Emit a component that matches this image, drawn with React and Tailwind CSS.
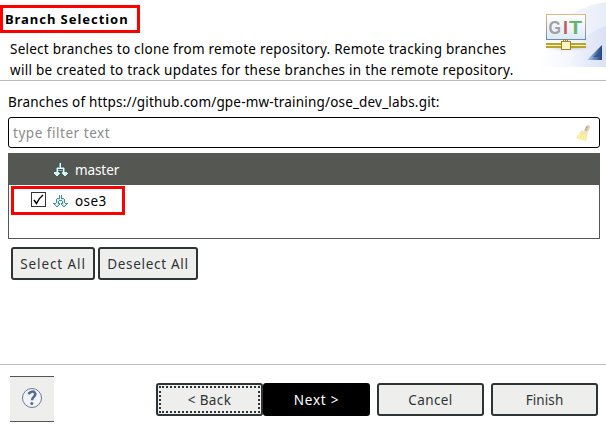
import React from 'react';

function BranchIcon({ split }) {
  return (
    <svg width="16" height="16" viewBox="0 0 16 16" fill="none" shapeRendering="crispEdges">
      {split ? (
        <g>
          <path d="M6 2h1v4h-1zM8 2h1v4h-1z" fill="#4b8f94" />
          <path d="M7 2h1v5h-1z" fill="#d9f6f7" />
          <path d="M4 5h3v1h-3zM8 5h3v1h-3zM3 6h1v4h-1zM11 6h1v4h-1zM5 8h1v3h-1zM9 8h1v3h-1zM6 7h3v1h-3z" fill="#4b8f94" />
          <path d="M4 6h7v1h-7zM4 7h1v5h-1zM10 7h1v5h-1z" fill="#c5eff2" />
          <path d="M0 10.5h3M5 10.5h2M8 10.5h2M12 10.5h3M1 11.5h1M6 11.5h1M8 11.5h1M13 11.5h1M2 12.5h1M5 12.5h1M9 12.5h1M12 12.5h1M3 13.5h2M10 13.5h2" stroke="#4b8f94" />
          <path d="M2 11.5h4M9 11.5h4M3 12.5h2M10 12.5h2" stroke="#c5eff2" />
        </g>
      ) : (
        <g>
          <path d="M6 1h1v4h-1zM4 5h7v1h-7zM3 6h1v4h-1zM11 6h1v4h-1zM5 8h5v1h-5z" fill="#7ab0b3" />
          <path d="M7 1h1v5h-1zM4 6h7v1h-7zM4 7h1v4h-1zM10 7h1v4h-1z" fill="#e2ffff" />
          <path d="M1 10h5v1h1v1h-1v1h-1v1h-2v-1h-1v-1h-1zM9 10h5v1h1v1h-1v1h-1v1h-2v-1h-1v-1h-1z" fill="#c9f8fa" />
        </g>
      )}
    </svg>
  );
}

function Broom() {
  return (
    <svg width="16" height="18" viewBox="0 0 16 18">
      <path d="M11 2l2-1 2 1-1 4-3 3-2-2z" fill="#dfcaa9" />
      <path d="M11 3l2 1M10 5l2 1" stroke="#b5a187" />
      <path d="M6 7l7 2-2 8-4-1-6-2z" fill="#f5eb91" />
      <path d="M6 6l7 2v2l-7-2z" fill="#e9e6e2" />
      <path d="M5 10l-2 4M8 11l-2 5M10 11l-1 5" stroke="#fff8c8" />
    </svg>
  );
}

function GitBanner() {
  return (
    <svg width="76" height="76" viewBox="0 0 76 76">
      <defs>
        <linearGradient id="sweep" x1="0" y1="0" x2="1" y2="0">
          <stop offset="0" stopColor="#ffffff" /><stop offset="1" stopColor="#e8edfa" />
        </linearGradient>
        <linearGradient id="fold" x1="0" y1="0" x2="1" y2="0">
          <stop offset="0" stopColor="#f4f6fd" /><stop offset="1" stopColor="#d9e1f5" />
        </linearGradient>
        <linearGradient id="panel" x1="0" y1="0" x2="0" y2="1">
          <stop offset="0" stopColor="#ffffff" /><stop offset="1" stopColor="#dcebf6" />
        </linearGradient>
        <linearGradient id="frame" x1="0" y1="0" x2="0" y2="1">
          <stop offset="0" stopColor="#e8b77e" /><stop offset="1" stopColor="#668eae" />
        </linearGradient>
        <linearGradient id="corner" x1="0" y1="0" x2="1" y2="0">
          <stop offset="0" stopColor="#b9d9eb" /><stop offset=".5" stopColor="#6487b8" /><stop offset="1" stopColor="#21427d" />
        </linearGradient>
        <radialGradient id="shade"><stop offset="0" stopColor="#b6afbf" /><stop offset="1" stopColor="#e9edf9" stopOpacity="0" /></radialGradient>
      </defs>
      <path d="M76 2Q38 8 22 33Q17 49 8 67H76z" fill="url(#sweep)" />
      <path d="M76 26Q52 32 38 67H76z" fill="url(#fold)" />
      <ellipse cx="39" cy="47" rx="28" ry="5" fill="url(#shade)" />
      <rect x="16.5" y="14.5" width="39" height="25" fill="url(#panel)" stroke="url(#frame)" />
      <text x="18.5" y="34" fontFamily="Liberation Sans" fontWeight="700" fontSize="18" fill="#a0a0a2" textLength="12.5" lengthAdjust="spacingAndGlyphs">G</text>
      <text x="33" y="34" fontFamily="Liberation Sans" fontWeight="700" fontSize="18" fill="#c45d62">I</text>
      <text x="39" y="34" fontFamily="Liberation Sans" fontWeight="700" fontSize="18" fill="#66b468" textLength="13" lengthAdjust="spacingAndGlyphs">T</text>
      <path d="M16 43h40v5h-40z" fill="#b5a42d" />
      <path d="M16 45h40v1h-40z" fill="#fff6ba" />
      <path d="M33 40h6" stroke="#977f27" strokeWidth="2" strokeDasharray="1 1" />
      <rect x="31.5" y="41.5" width="9" height="8" fill="#fff3c4" stroke="#a88327" />
      <path d="M72 45v15h-15z" fill="url(#corner)" />
      <path d="M70 51l-7 6h7z" fill="#28518d" opacity=".7" />
    </svg>
  );
}

function Button({ className, children }) {
  return (
    <button className={`flex h-[33px] shrink-0 items-center justify-center whitespace-nowrap rounded-[3px] border-2 border-[#2e3436] bg-[#eeeeec] pt-px text-[#2e3436] ${className}`}>
      {children}
    </button>
  );
}

export default function App() {
  return (
    <main className="flex h-[427px] w-[606px] flex-col overflow-hidden bg-white font-['Noto_Sans',sans-serif] text-[13.5px] leading-[21px] text-black">
      <header className="flex h-[81px] shrink-0 justify-between border-b border-[#babdb6]">
        <div className="whitespace-nowrap pt-[5px]">
          <h1 className="flex h-7 w-[140px] items-center border-[3px] border-[#ff0000] pl-0.5 text-[13px] font-bold tracking-[0.95px]"><span>Branch Selection</span></h1>
          <p className="pl-2.5 pt-[6px]"><span className="tracking-[0.24px]">Select branches to clone from remote repository. Remote tracking branches</span><br /><span className="tracking-[0.29px]">will be created to track updates for these branches in the remote repository.</span></p>
        </div>
        <GitBanner />
      </header>

      <section className="flex h-[283px] shrink-0 flex-col pl-2 pr-1.5 pt-[11px]">
        <label className="whitespace-nowrap"><span className="tracking-[0.18px]">Branches of https://github.com/gpe-mw-training/ose_dev_labs.git:</span></label>
        <div className="mt-1 flex h-[31px] shrink-0 items-center justify-between rounded-[3px] border border-black pl-1 pr-2 text-[#8b8b8b]">
          <span className="pt-0.5 tracking-[0.53px]">type filter text</span><Broom />
        </div>
        <div className="mt-[5px] h-[86px] shrink-0 border border-[#555753]">
          <div className="flex h-[31px] items-center bg-[#555753] pl-11 text-white">
            <BranchIcon /><span className="ml-[6px] pt-0.5 tracking-[-0.1px]">master</span>
          </div>
          <div className="ml-0.5 mt-px flex h-[29px] w-[114px] items-center border-[3px] border-[#ff0000] pl-[17px]">
            <span className="-mt-0.5 flex size-[15px] items-center justify-center border border-[#333]">
              <svg width="13" height="13" viewBox="0 0 13 13"><path d="M2 7l2.5 3.5Q7 5 11 2" fill="none" stroke="#000" strokeWidth="1.5" /></svg>
            </span>
            <span className="ml-[7px]"><BranchIcon split /></span><span className="ml-[6px] pt-0.5 tracking-[0.4px]">ose3</span>
          </div>
        </div>
        <div className="ml-[3px] mt-2 flex gap-[3px]">
          <Button className="w-[84px]"><span className="tracking-[0.9px]">Select All</span></Button>
          <Button className="w-[100px]"><span className="tracking-[0.7px]">Deselect All</span></Button>
        </div>
      </section>

      <footer className="flex h-[63px] items-start border-t border-[#babdb6] pl-2.5 pt-[11px]">
        <button className="flex h-[46px] w-11 items-center justify-center border-y border-[#555753] bg-[#eeeeec]">
          <svg className="mb-0.5" width="22" height="22" viewBox="0 0 22 22">
            <circle cx="11" cy="11" r="9.5" fill="#f3f4f5" stroke="#687ba0" />
            <path d="M7.3 7q4-4 6.5-1.3c2.5 3-2.8 4-2.8 7.5" fill="none" stroke="#536b98" strokeWidth="2.5" />
            <circle cx="10.8" cy="16.5" r="1.5" fill="#536b98" />
          </svg>
        </button>
        <div className="ml-[102px] mt-[7px] flex">
          <Button className="w-[107px] p-px!"><span className="flex h-full w-full items-center justify-center border-2 border-dotted border-[#2e3436] pt-px tracking-[0.4px]">&lt; Back</span></Button>
          <Button className="w-[107px] border-black! bg-black! text-white!"><span className="tracking-[0.8px]">Next &gt;</span></Button>
          <Button className="ml-[7px] w-[107px]"><span className="tracking-[0.4px]">Cancel</span></Button>
          <Button className="ml-[7px] w-[107px]"><span className="tracking-[0.1px]">Finish</span></Button>
        </div>
      </footer>
    </main>
  );
}
